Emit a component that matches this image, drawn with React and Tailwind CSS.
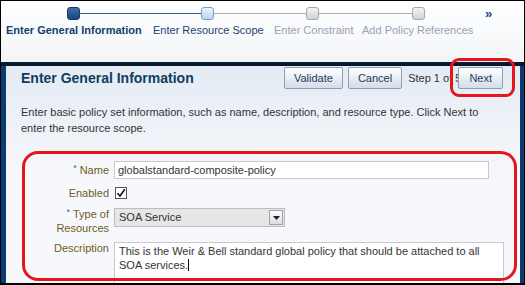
import React from 'react';

// Wizard train steps
const steps = [
  { label: 'Enter General Information', state: 'current', width: 'w-[135px]' },
  { label: 'Enter Resource Scope', state: 'next', width: 'w-[110px]' },
  { label: 'Enter Constraint', state: 'off', width: 'w-[78px]' },
  { label: 'Add Policy References', state: 'off', width: 'w-[110px]' },
];

function Stop({ state }) {
  if (state === 'current') {
    return <div className="w-[13px] h-[13px] rounded-[3px] border border-[#153d6b] bg-gradient-to-b from-[#3d6ea6] to-[#17477f] shrink-0" />;
  }
  if (state === 'next') {
    return <div className="w-[13px] h-[13px] rounded-[3px] border border-[#7d9cc9] bg-gradient-to-b from-[#eef4fc] to-[#bcd2ef] shrink-0" />;
  }
  return <div className="w-[13px] h-[13px] rounded-[3px] border border-[#a3a7ae] bg-gradient-to-b from-[#f3f4f5] to-[#cfd2d6] shrink-0" />;
}

function Train() {
  return (
    <div className="h-[61px] shrink-0 bg-gradient-to-b from-white to-[#f3f5f8]">
      {/* stops and connectors */}
      <div className="flex items-center pt-[6px] pl-[66px]">
        <Stop state="current" />
        <div className="w-[121px] h-px bg-[#2d5d9c]" />
        <Stop state="next" />
        <div className="w-[92px] h-px bg-[#a9b2c0]" />
        <Stop state="off" />
        <div className="w-[93px] h-px bg-[#a9acb2]" />
        <Stop state="off" />
        <span className="ml-[60px] text-[13px] leading-[13px] font-bold text-[#1f3f93]">»</span>
      </div>
      {/* labels */}
      <div className="flex pl-[5px] mt-[3px] text-[11px] leading-[14px]">
        {steps.map((s, i) => (
          <div
            key={s.label}
            className={
              s.width + ' text-center whitespace-nowrap ' +
              (i === 0 ? '' : i === 1 ? 'ml-[12px] ' : i === 2 ? 'ml-[11px] ' : 'ml-[10px] ') +
              (s.state === 'current' ? 'font-bold text-[#123f6e]' : s.state === 'next' ? 'text-[#1e3f70]' : 'text-[#99a1b2]')
            }
          >
            {s.label}
          </div>
        ))}
      </div>
    </div>
  );
}

function Btn({ children, className = '' }) {
  return (
    <button className={'h-[22px] px-[9px] border border-[#8e9db0] rounded-[2px] bg-gradient-to-b from-white to-[#d5dde7] text-[11px] text-[#1b3d5e] leading-none ' + className}>
      {children}
    </button>
  );
}

// Right-aligned field label; lines[0] gets the required mark
function Label({ lines, req }) {
  return (
    <div className="w-[88px] shrink-0 flex flex-col items-end text-[#6e5c26] leading-[14px]">
      <div className="flex items-start">
        {req && <span className="text-[#3566a6] text-[9px] leading-[11px] mr-[3px]">*</span>}
        <span>{lines[0]}</span>
      </div>
      {lines[1] && <span>{lines[1]}</span>}
    </div>
  );
}

export default function App() {
  return (
    <div
      className="relative w-[525px] h-[285px] overflow-hidden bg-white border border-black border-b-2 flex flex-col"
      style={{ fontFamily: '"Liberation Sans", Arial, sans-serif' }}
    >
      <Train />
      <div className="h-[4px] shrink-0 bg-gradient-to-b from-[#0b2038] to-[#051426]" />

      {/* panel */}
      <div className="flex-1 shrink-0 border-l-[5px] border-r-[4px] border-[#0c3a73] bg-gradient-to-b from-[#e4ebf4] via-[#f7f8fb] to-[#f7f8fb]">
        {/* header */}
        <div className="flex items-start pt-[1px] pl-[15px]">
          <h1 className="mt-[3px] text-[14px] leading-[16px] font-bold text-[#0f3d5f]">Enter General Information</h1>
          <div className="ml-auto mr-[17px] flex items-center">
            <Btn>Validate</Btn>
            <Btn className="ml-[5px]">Cancel</Btn>
            <span className="ml-[6px] text-[11px] text-[#333]">Step 1 of 5</span>
            <Btn className="ml-[-3px] px-[10px]">Next</Btn>
          </div>
        </div>

        {/* instructions */}
        <p className="mt-[15px] pl-[15px] pr-[20px] text-[11px] leading-[16px] text-[#333]">
          Enter basic policy set information, such as name, description, and resource type. Click Next to enter the resource scope.
        </p>

        {/* form */}
        <div className="pl-[15px] text-[11px]">
          <div className="flex items-center mt-[25px]">
            <Label req lines={['Name']} />
            <div className="ml-[5px] w-[375px] h-[18px] border border-[#c7cbd1] bg-white pl-[3px] flex items-center text-[#333]">
              globalstandard-composite-policy
            </div>
          </div>

          <div className="flex items-center mt-[7px]">
            <Label lines={['Enabled']} />
            <div className="ml-[6px] w-[12px] h-[12px] border border-[#555] bg-white flex items-center justify-center">
              <svg width="10" height="10" viewBox="0 0 10 10">
                <path d="M1.5 5.2 L4 8 L8.8 1.2" fill="none" stroke="#111" strokeWidth="1.6" />
              </svg>
            </div>
          </div>

          <div className="flex items-start mt-[7px]">
            <Label req lines={['Type of', 'Resources']} />
            <div className="ml-[5px] mt-[1px] w-[171px] h-[19px] border border-[#b9bdc3] bg-[#e6e6e6] flex items-center">
              <span className="pl-[4px] text-[#333] flex-1">SOA Service</span>
              <div className="w-[14px] h-[15px] mr-[1px] border border-[#9ea3a9] bg-gradient-to-b from-white to-[#dcdcdc] flex items-center justify-center">
                <svg width="7" height="4" viewBox="0 0 7 4"><path d="M0 0 H7 L3.5 4 Z" fill="#222" /></svg>
              </div>
            </div>
          </div>

          <div className="flex items-start mt-[6px]">
            <Label lines={['Description']} />
            <div className="ml-[5px] mt-[1px] w-[390px] h-[50px] border border-[#c7cbd1] bg-white pl-[4px] pt-[1px] leading-[14px] text-[#333]">
              This is the Weir &amp; Bell standard global policy that should be attached to all SOA services.
              <span className="inline-block w-px h-[12px] bg-black align-[-2px]" />
            </div>
          </div>
        </div>
      </div>

      {/* annotation marks */}
      <div className="absolute left-[449px] top-[57px] w-[65px] h-[39px] border-[3px] border-[#e5161e] rounded-[9px]" />
      <div className="absolute left-[21px] top-[150px] w-[495px] h-[130px] border-[3px] border-[#e5161e] rounded-[16px]" />
    </div>
  );
}
